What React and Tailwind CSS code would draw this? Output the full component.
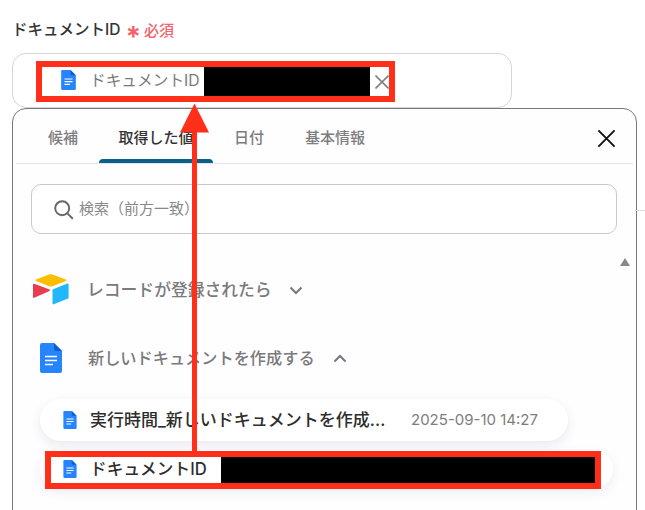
const FONT = "font-['Inter','Noto_Sans_CJK_JP',sans-serif]";

function DocIcon({ className }) {
  return (
    <svg viewBox="0 0 22 30" className={className}>
      <path d="M2 0H14L22 8V28a2 2 0 0 1-2 2H2a2 2 0 0 1-2-2V2a2 2 0 0 1 2-2Z" fill="#2684fc" />
      <path d="M14 0L22 8H16a2 2 0 0 1-2-2Z" fill="#0f5fd0" />
      <path d="M5 13.500H17M5 17.500H17M5 21.500H13" stroke="#fff" strokeWidth="1.700" fill="none" />
    </svg>
  );
}

function AirtableIcon() {
  return (
    <svg viewBox="0 0 36 31" className="w-[36px] h-[31px] shrink-0">
      <path d="M16 .6 3 5.600c-.7.300-.7 1.200 0 1.500l13.200 5.200c1.100.4 2.300.4 3.400 0l13.300-5.200c.7-.3.700-1.200 0-1.500L19.500.6c-1.100-.5-2.400-.5-3.500 0Z" fill="#fcbf00" />
      <path d="M19.500 16v13.400c0 .6.600 1 1.200.8l14.300-5.600c.4-.1.600-.5.600-.8V10.400c0-.6-.6-1-1.200-.8l-14.300 5.600c-.4.100-.6.500-.6.800Z" fill="#20b8fb" />
      <path d="M0 10.500V23c0 .7.600 1.100 1.200.8L16.500 17c.6-.3.600-1.100 0-1.400L1.200 9.700C.6 9.500 0 9.900 0 10.500Z" fill="#ea3a4e" />
    </svg>
  );
}

function Tab({ children, active }) {
  return (
    <div className={`h-full flex items-center justify-center relative text-[15px] font-medium ${active ? "w-[114px] text-[#333]" : "text-[#7d7d7d]"}`}>
      <span className="whitespace-nowrap">{children}</span>
      {active && <div className="absolute left-0 right-0 bottom-0 h-[4px] rounded-t-[4px] bg-[#0a6088]" />}
    </div>
  );
}

export default function App() {
  return (
    <div className={`relative w-[645px] h-[510px] overflow-hidden bg-white ${FONT}`}>
      <div className="absolute right-0 top-[210px] w-[10px] h-px bg-[#dcdcdc]" />
      <div className="px-[12px] pt-[19px]">
        <div className="flex items-center h-[22px] text-[15.5px] font-medium text-[#333] leading-none">
          <span>ドキュメントID</span>
          <span className="ml-[5px] text-[#f5626c] text-[28px] leading-none font-bold h-[22px] mt-[7px]">*</span>
          <span className="ml-[3px] text-[#f5626c] text-[15px] font-medium">必須</span>
        </div>

        <div className="mt-[12px] w-[500px] h-[55px] rounded-[14px] border border-[#d5d5dc] bg-white flex items-center pl-[48px] text-[15.7px] text-[#7a7a7a]">
          <DocIcon className="w-[15px] h-[20px] shrink-0 mt-[-1px]" />
          <span className="ml-[14px] mt-[1px] whitespace-nowrap">ドキュメントID</span>
        </div>

        <div className="w-[625px] h-[420px] rounded-t-[14px] border border-[#777] bg-[#fefdff] pt-px">
          <div className="mx-[3px] h-[54px] pt-[3px] border-b border-[#e6e5ea] relative">
            <div className="flex items-center h-[50px] pl-[32px] gap-[21px]">
              <Tab>候補</Tab>
              <Tab active>取得した値</Tab>
              <Tab>日付</Tab>
              <div className="ml-[20px] h-full"><Tab>基本情報</Tab></div>
            </div>
            <svg viewBox="0 0 20 20" className="absolute right-[17px] top-[19px] w-[19px] h-[19px]" stroke="#111" strokeWidth="2" fill="none">
              <path d="M1.500 1.500 18.500 18.500M18.500 1.500 1.500 18.500" />
            </svg>
          </div>

          <div className="ml-[18px] mt-[20px] w-[586px] h-[50px] rounded-[10px] border border-[#c9c9c9] bg-white flex items-center pl-[21px]">
            <svg viewBox="0 0 24 24" className="w-[21px] h-[21px] shrink-0" stroke="#666" strokeWidth="2.200" fill="none" strokeLinecap="round">
              <circle cx="10.500" cy="10.500" r="8" />
              <path d="m16.500 16.500 5.500 5.500" />
            </svg>
            <span className="ml-[5px] text-[15px] text-[#888]">検索（前方一致）</span>
          </div>

          <div className="relative">
            <div className="absolute right-[6px] top-[24px] w-0 h-0 border-l-[5px] border-r-[5px] border-b-[8px] border-l-transparent border-r-transparent border-b-[#888]" />
            <div className="pl-[20px] pt-[39px] flex items-center h-[71px]">
              <AirtableIcon />
              <span className="ml-[18px] mt-[4px] text-[16.8px] font-medium text-[#7a7a7a]">レコードが登録されたら</span>
              <svg viewBox="0 0 14 9" className="ml-[17px] mt-[2px] w-[14px] h-[9px]" stroke="#777" strokeWidth="2" fill="none"><path d="m1.500 1.500 5.500 5.500 5.500-5.500" /></svg>
            </div>
            <div className="pl-[27px] mt-[38px] flex items-center h-[30px]">
              <DocIcon className="w-[22px] h-[30px] shrink-0" />
              <span className="ml-[26px] text-[16.2px] font-medium text-[#7a7a7a]">新しいドキュメントを作成する</span>
              <svg viewBox="0 0 14 9" className="ml-[18px] w-[14px] h-[9px]" stroke="#777" strokeWidth="2" fill="none"><path d="m1.500 7.500 5.500-5.500 5.500 5.500" /></svg>
            </div>

            <div className="ml-[27px] mt-[26px] w-[528px] h-[42px] rounded-full bg-white shadow-[0_4px_12px_rgba(60,50,90,0.1)] flex items-center pl-[23px]">
              <DocIcon className="w-[14px] h-[18px] shrink-0" />
              <span className="ml-[13px] mt-[1px] w-[305px] whitespace-nowrap text-[17px] font-medium text-[#2d2d2d]">実行時間_新しいドキュメントを作成...</span>
              <span className="ml-[16px] text-[15px] text-[#7d7d7d] whitespace-nowrap">2025-09-10 14:27</span>
            </div>
            <div className="ml-[27px] mt-[9px] w-[573px] h-[38px] rounded-full bg-white shadow-[0_4px_12px_rgba(60,50,90,0.08)] flex items-center pl-[23px]">
              <DocIcon className="w-[14px] h-[18px] shrink-0" />
              <span className="ml-[13px] mt-[1px] text-[16.6px] tracking-[0.1px] font-medium text-[#2d2d2d] whitespace-nowrap">ドキュメントID</span>
            </div>
          </div>
        </div>
      </div>

      {/* annotations */}
      <div className="absolute left-[36px] top-[61px] w-[359px] h-[41px] border-[6px] border-[#ff2f1a] pointer-events-none">
        <div className="absolute left-[162px] top-0 bottom-0 w-[166px] bg-black" />
        <svg viewBox="0 0 14 14" className="absolute right-0 top-[8px] w-[14px] h-[14px]" stroke="#808080" strokeWidth="1.600" fill="none"><path d="M.5.500 13.500 13.500M13.500.500 .5 13.500" /></svg>
      </div>
      <div className="absolute left-[45px] top-[451px] w-[556px] h-[38px] border-[6px] border-[#ff2f1a]">
        <div className="absolute left-[170px] top-0 bottom-0 right-0 bg-black" />
      </div>
      <div className="absolute left-[192px] top-[130px] w-[5px] h-[321px] bg-[#ff2f1a]" />
      <svg viewBox="0 0 30 30" className="absolute left-[180px] top-[103px] w-[29px] h-[30px]">
        <path d="M15 0 30 30H0Z" fill="#ff2f1a" />
      </svg>
    </div>
  );
}
